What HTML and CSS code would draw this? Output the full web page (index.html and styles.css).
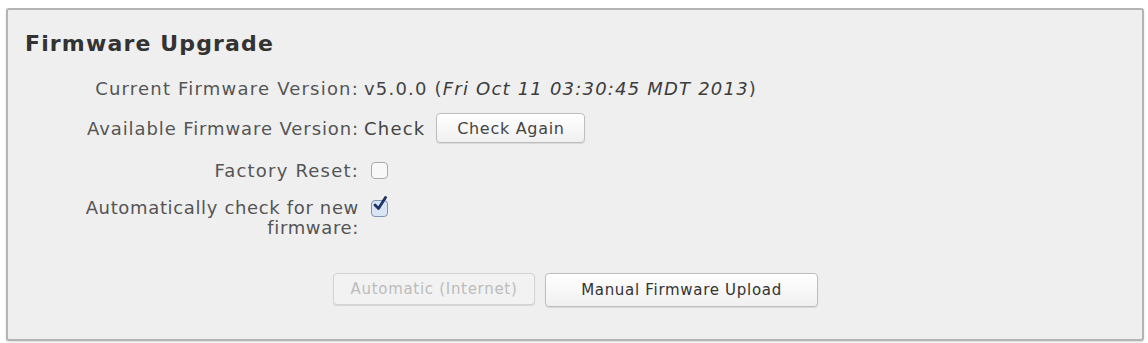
FILE: index.html
```html
<!DOCTYPE html>
<html>
<head>
<meta charset="utf-8">
<link rel="stylesheet" href="styles.css">
</head>
<body>
<div class="panel">
  <h2 class="title">Firmware Upgrade</h2>
  <div class="form">
    <div class="label row1">Current Firmware Version:</div>
    <div class="value row1"><span>v5.0.0 (<em>Fri Oct 11 03:30:45 MDT 2013</em>)</span></div>

    <div class="label row2 label-tight">Available Firmware Version:</div>
    <div class="value row2"><span>Check</span><button class="btn btn-check">Check Again</button></div>

    <div class="label row3">Factory Reset:</div>
    <div class="value row3"><span class="cb"></span></div>

    <div class="label label-wrap"><span class="wrap-text">Automatically check for new firmware:</span></div>
    <div class="value value-top"><span class="cb cb-on"><svg viewBox="0 0 17 17" width="17" height="17"><path d="M4 9 L7.5 12.5 L14.5 1.5" fill="none" stroke="#1d3566" stroke-width="2.8" stroke-linecap="round" stroke-linejoin="round"/></svg></span></div>
  </div>
  <div class="actions">
    <button class="btn btn-disabled">Automatic (Internet)</button>
    <button class="btn btn-main">Manual Firmware Upload</button>
  </div>
</div>
</body>
</html>
```
FILE: styles.css
```css
html, body {
  margin: 0;
  padding: 0;
  background: #ffffff;
}
body {
  padding: 8px 4px 2px 6px;
  font-family: "DejaVu Sans", Verdana, sans-serif;
  color: #444;
}
.panel {
  box-sizing: border-box;
  width: 1138px;
  height: 333px;
  background: #efefef;
  border: 2px solid #b4b4b4;
  border-radius: 3px;
  box-shadow: 0 1px 2px rgba(0,0,0,0.15);
  padding: 20px 17px 0 17px;
}
.title {
  margin: 0;
  font-size: 22px;
  letter-spacing: 1.15px;
  font-weight: bold;
  color: #333;
  line-height: 28px;
}
.form {
  display: grid;
  grid-template-columns: 334px auto;
  column-gap: 5px;
  margin-top: 10px;
  font-size: 18px;
  letter-spacing: 1.2px;
}
.label {
  color: #555;
  display: flex;
  align-items: center;
  justify-content: flex-end;
}
.label-tight {
  letter-spacing: 0.9px;
}
.value {
  display: flex;
  align-items: center;
  gap: 11px;
  color: #444;
}
.row1, .row2 { height: 40px; }
.row3 { height: 44px; }
.value em {
  font-style: italic;
  color: #3c3c3c;
}
.label-wrap {
  display: block;
  text-align: right;
  line-height: 20px;
  margin-top: 6px;
  letter-spacing: 0.65px;
}
.wrap-text {
  display: inline-block;
  max-width: 290px;
}
.value-top {
  align-items: flex-start;
  margin-top: 8px;
}
.btn {
  font-family: "DejaVu Sans", Verdana, sans-serif;
  font-size: 15px;
  letter-spacing: 0.7px;
  color: #444;
  background: linear-gradient(#ffffff, #f0f0f0);
  border: 1px solid #bdbdbd;
  border-radius: 4px;
  box-shadow: 0 1px 1px rgba(0,0,0,0.1);
  padding: 0;
  height: 30px;
}
.btn-check {
  width: 149px;
  font-size: 16px;
}
.cb {
  display: inline-block;
  box-sizing: border-box;
  width: 17px;
  height: 17px;
  margin-left: 7px;
  border: 1px solid #aaaaaa;
  border-radius: 4px;
  background: #f8f8f8;
  position: relative;
}
.cb-on {
  border-color: #7d95b4;
  background: #d9e5f3;
}
.cb-on svg {
  position: absolute;
  left: -1px;
  top: -5px;
}
.actions {
  display: flex;
  gap: 10px;
  padding-left: 308px;
  margin-top: 35px;
}
.btn-disabled {
  width: 202px;
  height: 32px;
  color: #bcbcbc;
  border-color: #d4d4d4;
  background: #f2f2f2;
}
.btn-main {
  width: 273px;
  height: 34px;
  color: #333;
}
```
